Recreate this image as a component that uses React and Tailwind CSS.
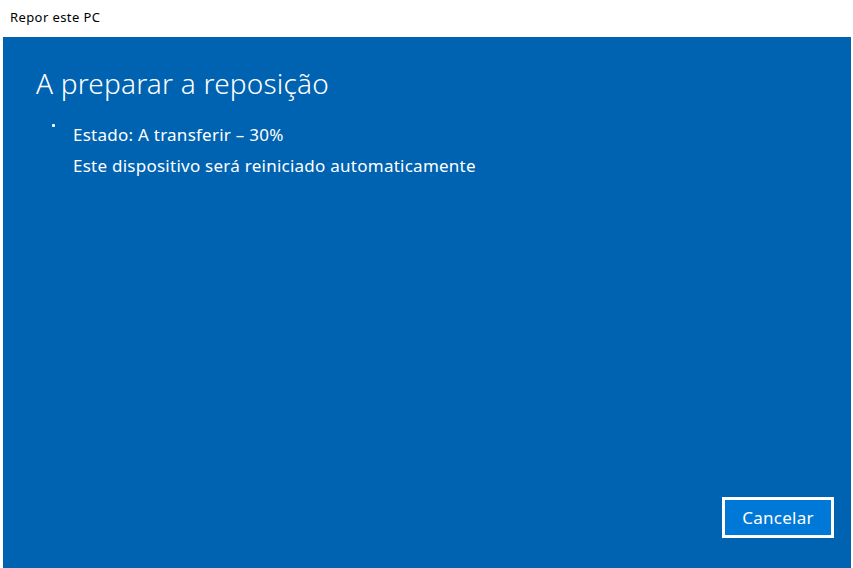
export default function App() {
  return (
    <div className="w-[853px] h-[568px] bg-white flex flex-col overflow-hidden" style={{ fontFamily: '"Noto Sans", "Open Sans", sans-serif' }}>
      <div className="h-[37px] flex items-start pl-[10px] pt-[9px] text-[13px] tracking-[0.4px] text-black leading-[16px]">Repor este PC</div>
      <div className="flex-1 ml-[3px] mr-[2px] bg-[#0063b1] flex flex-col text-white">
        <h1 className="ml-[33px] mt-[27px] text-[28px] font-light leading-[38px] tracking-[0.2px]">A preparar a reposição</h1>
        <div className="flex mt-[17px]">
          <div className="w-[70px] flex justify-end pr-[18px] pt-[5px]">
            <div className="w-[3px] h-[3px] rounded-[1px] bg-white"></div>
          </div>
          <div className="flex flex-col text-[17px] tracking-[0.25px] leading-[31px]">
            <div>Estado: A transferir – 30%</div>
            <div>Este dispositivo será reiniciado automaticamente</div>
          </div>
        </div>
        <div className="flex-1"></div>
        <div className="flex justify-end pr-[17px] pb-[30px]">
          <button className="w-[112px] h-[41px] border-[3px] border-white bg-[#0078d7] text-white text-[17px] tracking-[0.25px] flex items-center justify-center">Cancelar</button>
        </div>
      </div>
    </div>
  );
}
